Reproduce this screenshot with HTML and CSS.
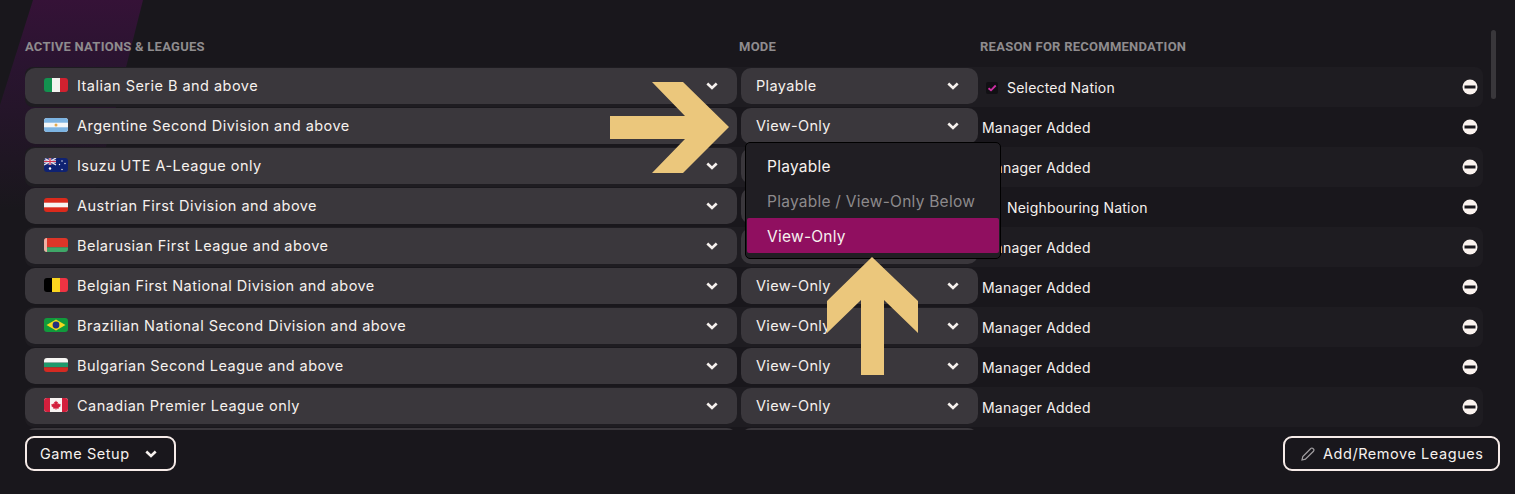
FILE: index.html
```html
<!DOCTYPE html>
<html lang="en">
<head>
    <meta charset="UTF-8">
    <title>Active Nations and Leagues</title>
    <link rel="stylesheet" href="styles.css">
</head>
<body>
    <div class="glow"></div>
    <svg width="0" height="0" class="defs">
        <defs>
            <symbol id="chev" viewBox="0 0 12 8"><path d="M1.300 1.500 6 6l4.700-4.500" fill="none" stroke="currentColor" stroke-width="2.600"/></symbol>
            <symbol id="minus" viewBox="0 0 16 16"><circle cx="8" cy="8" r="7.500" fill="#fbf3ef"/><rect x="2.500" y="6.500" width="11" height="3" fill="#1b191e"/></symbol>
            <symbol id="tick" viewBox="0 0 12 12"><rect width="12" height="12" rx="2" fill="#111014"/><path d="M2.500 6.200 5 8.300l4.700-4.800" fill="none" stroke="#cf2fa5" stroke-width="1.800"/></symbol>
        </defs>
    </svg>

    <main class="panel">
        <div class="heads">
            <span>ACTIVE NATIONS &amp; LEAGUES</span>
            <span>MODE</span>
            <span>REASON FOR RECOMMENDATION</span>
        </div>

        <div class="list">
            <div class="row">
                <div class="select nation">
                    <svg class="flag" viewBox="0 0 24 14"><rect width="8" height="14" fill="#12924f"/><rect x="8" width="8" height="14" fill="#f3f3f0"/><rect x="16" width="8" height="14" fill="#d0212f"/></svg>
                    <span class="grow">Italian Serie B and above</span>
                    <svg class="chev"><use href="#chev"/></svg>
                </div>
                <div class="select mode"><span class="grow">Playable</span><svg class="chev"><use href="#chev"/></svg></div>
                <div class="reason"><svg class="tick"><use href="#tick"/></svg><span class="grow">Selected Nation</span><svg class="minus"><use href="#minus"/></svg></div>
            </div>
            <div class="row">
                <div class="select nation">
                    <svg class="flag" viewBox="0 0 24 14"><rect width="24" height="14" fill="#f4f6f7"/><rect width="24" height="4.700" fill="#7db4e2"/><rect y="9.300" width="24" height="4.700" fill="#7db4e2"/><circle cx="12" cy="7" r="1.500" fill="#e5a94c"/></svg>
                    <span class="grow">Argentine Second Division and above</span>
                    <svg class="chev"><use href="#chev"/></svg>
                </div>
                <div class="select mode"><span class="grow">View-Only</span><svg class="chev"><use href="#chev"/></svg></div>
                <div class="reason plain"><span class="grow">Manager Added</span><svg class="minus"><use href="#minus"/></svg></div>
            </div>
            <div class="row">
                <div class="select nation">
                    <svg class="flag" viewBox="0 0 24 14"><rect width="24" height="14" fill="#0f2272"/><rect width="12" height="7" fill="#2b3a80"/><path d="M0 0l12 7M12 0 0 7" stroke="#e9e2ea" stroke-width="1.400"/><path d="M6 0v7M0 3.500h12" stroke="#e9e2ea" stroke-width="2.400"/><path d="M6 0v7M0 3.500h12" stroke="#d0344f" stroke-width="1.200"/><circle cx="6" cy="10.500" r="1.200" fill="#fff"/><circle cx="18" cy="3" r=".7" fill="#fff"/><circle cx="18" cy="11.500" r=".7" fill="#fff"/><circle cx="15.500" cy="6.500" r=".7" fill="#fff"/><circle cx="21" cy="5.500" r=".7" fill="#fff"/></svg>
                    <span class="grow">Isuzu UTE A-League only</span>
                    <svg class="chev"><use href="#chev"/></svg>
                </div>
                <div class="select mode"><span class="grow"></span><svg class="chev"><use href="#chev"/></svg></div>
                <div class="reason plain"><span class="grow">Manager Added</span><svg class="minus"><use href="#minus"/></svg></div>
            </div>
            <div class="row">
                <div class="select nation">
                    <svg class="flag" viewBox="0 0 24 14"><rect width="24" height="14" fill="#db2a1c"/><rect y="4.700" width="24" height="4.600" fill="#f6f4f2"/></svg>
                    <span class="grow">Austrian First Division and above</span>
                    <svg class="chev"><use href="#chev"/></svg>
                </div>
                <div class="select mode"><span class="grow"></span><svg class="chev"><use href="#chev"/></svg></div>
                <div class="reason"><svg class="tick"><use href="#tick"/></svg><span class="grow">Neighbouring Nation</span><svg class="minus"><use href="#minus"/></svg></div>
            </div>
            <div class="row">
                <div class="select nation">
                    <svg class="flag" viewBox="0 0 24 14"><rect width="24" height="9.300" fill="#dd3528"/><rect y="9.300" width="24" height="4.700" fill="#3fa768"/><rect width="3" height="14" fill="#eeb0a4"/></svg>
                    <span class="grow">Belarusian First League and above</span>
                    <svg class="chev"><use href="#chev"/></svg>
                </div>
                <div class="select mode"><span class="grow"></span><svg class="chev"><use href="#chev"/></svg></div>
                <div class="reason plain"><span class="grow">Manager Added</span><svg class="minus"><use href="#minus"/></svg></div>
            </div>
            <div class="row">
                <div class="select nation">
                    <svg class="flag" viewBox="0 0 24 14"><rect width="8" height="14" fill="#000"/><rect x="8" width="8" height="14" fill="#fbd51f"/><rect x="16" width="8" height="14" fill="#ee3342"/></svg>
                    <span class="grow">Belgian First National Division and above</span>
                    <svg class="chev"><use href="#chev"/></svg>
                </div>
                <div class="select mode"><span class="grow">View-Only</span><svg class="chev"><use href="#chev"/></svg></div>
                <div class="reason plain"><span class="grow">Manager Added</span><svg class="minus"><use href="#minus"/></svg></div>
            </div>
            <div class="row">
                <div class="select nation">
                    <svg class="flag" viewBox="0 0 24 14"><rect width="24" height="14" fill="#119a3c"/><path d="M12 1.500 21.500 7 12 12.500 2.500 7z" fill="#f5d81f"/><circle cx="12" cy="7" r="3.400" fill="#23307f"/></svg>
                    <span class="grow">Brazilian National Second Division and above</span>
                    <svg class="chev"><use href="#chev"/></svg>
                </div>
                <div class="select mode"><span class="grow">View-Only</span><svg class="chev"><use href="#chev"/></svg></div>
                <div class="reason plain"><span class="grow">Manager Added</span><svg class="minus"><use href="#minus"/></svg></div>
            </div>
            <div class="row">
                <div class="select nation">
                    <svg class="flag" viewBox="0 0 24 14"><rect width="24" height="4.700" fill="#f7f7f5"/><rect y="4.700" width="24" height="4.600" fill="#1d9a6c"/><rect y="9.300" width="24" height="4.700" fill="#d42a22"/></svg>
                    <span class="grow">Bulgarian Second League and above</span>
                    <svg class="chev"><use href="#chev"/></svg>
                </div>
                <div class="select mode"><span class="grow">View-Only</span><svg class="chev"><use href="#chev"/></svg></div>
                <div class="reason plain"><span class="grow">Manager Added</span><svg class="minus"><use href="#minus"/></svg></div>
            </div>
            <div class="row">
                <div class="select nation">
                    <svg class="flag" viewBox="0 0 24 14"><rect width="24" height="14" fill="#f7f3f2"/><rect width="6" height="14" fill="#d31f3c"/><rect x="18" width="6" height="14" fill="#d31f3c"/><path d="M12 2.500l1 1.800 1-.5-.4 2.400 1.300-1 .4 1 1.400-.2-.5 1.500.6.400-2.300 1.900.3 1-2.500-.3V12h-.6v-1.500l-2.500.3.300-1-2.300-1.900.6-.4-.5-1.500 1.400.2.4-1 1.300 1-.4-2.400 1 .5z" fill="#d31f3c"/></svg>
                    <span class="grow">Canadian Premier League only</span>
                    <svg class="chev"><use href="#chev"/></svg>
                </div>
                <div class="select mode"><span class="grow">View-Only</span><svg class="chev"><use href="#chev"/></svg></div>
                <div class="reason plain"><span class="grow">Manager Added</span><svg class="minus"><use href="#minus"/></svg></div>
            </div>
            <div class="row">
                <div class="select nation"></div>
                <div class="select mode"></div>
            </div>
        </div>

        <div class="foot">
            <button class="btn setup">Game Setup <svg class="chev"><use href="#chev"/></svg></button>
            <button class="btn add">
                <svg class="pencil" viewBox="0 0 14 14"><path d="M1 13l.8-3.400L9.800 1.500a1.500 1.500 0 0 1 2.200 0l.5.500a1.500 1.500 0 0 1 0 2.200L4.400 12.200z" fill="none" stroke="#a3a0a3" stroke-width="1.200"/></svg>
                Add/Remove Leagues
            </button>
        </div>
    </main>

    <div class="scrollbar"></div>

    <div class="menu">
        <div class="item">Playable</div>
        <div class="item off">Playable / View-Only Below</div>
        <div class="item on">View-Only</div>
    </div>

    <svg class="arrow arrow-right" viewBox="0 0 119 91"><path d="M0 34h75L42 0h31l46 45-46 46H42l33-34H0z"/></svg>
    <svg class="arrow arrow-up" viewBox="0 0 91 118"><path d="M45 0l46 44v32L57 43v75H34V43L0 76V44z"/></svg>
</body>
</html>
```

FILE: styles.css
```css
* {
    box-sizing: border-box;
}

body {
    margin: 0;
    height: 494px;
    overflow: hidden;
    background: #19171c;
    color: #f6f1ee;
    font-family: "Inter", "Liberation Sans", sans-serif;
    font-size: 14.5px;
    letter-spacing: .47px;
}

.defs {
    position: absolute;
}

.glow {
    position: absolute;
    left: 0;
    top: 0;
    width: 150px;
    height: 210px;
    background: linear-gradient(180deg, #351237 0%, #2a1430 30%, rgba(40, 22, 44, 0) 100%);
    clip-path: polygon(33px 0, 143px 0, 90px 210px, 0 210px, 0 105px);
}

.panel {
    position: relative;
    padding: 40px 32px 0 25px;
}

.heads {
    display: grid;
    grid-template-columns: 714px 241px 1fr;
    height: 27px;
    font-family: "Roboto", "Liberation Sans", sans-serif;
    font-weight: bold;
    font-size: 13px;
    letter-spacing: .25px;
    color: #8f8c8e;
    line-height: 14px;
}

.list {
    height: 363px;
    overflow: hidden;
}

.row {
    display: grid;
    grid-template-columns: 712px 237px 1fr;
    column-gap: 4px;
    height: 40px;
    padding-top: 1px;
    border-radius: 8px;
}

.row:nth-child(odd) {
    background: #1e1c21;
}

.select {
    display: flex;
    align-items: center;
    height: 36px;
    background: #3a373c;
    border-radius: 10px;
}

.select .grow {
    padding-bottom: 2px;
}

.nation {
    padding: 0 19px;
}

.mode {
    padding: 0 19px 0 15px;
    letter-spacing: .35px;
}

.grow {
    flex: 1;
}

.flag {
    width: 24px;
    height: 14px;
    margin-right: 9px;
    border-radius: 3px;
    position: relative;
    top: -1px;
}

.chev {
    width: 12px;
    height: 8px;
    color: #f6f1ee;
}

.reason {
    display: flex;
    align-items: center;
    height: 39px;
    margin-left: -4px;
    padding: 0 5px 0 8px;
    font-size: 14px;
    letter-spacing: .2px;
}

.reason.plain {
    padding-left: 4px;
}

.tick {
    width: 12px;
    height: 12px;
    margin-right: 9px;
}

.minus {
    width: 16px;
    height: 16px;
    margin-top: -2px;
}

.foot {
    display: flex;
    justify-content: space-between;
    align-items: center;
    margin-top: 6px;
    margin-right: -17px;
}

.btn {
    display: flex;
    align-items: center;
    height: 35px;
    background: #19171c;
    color: inherit;
    font: inherit;
    letter-spacing: .55px;
    border: 2px solid #f6ebe8;
    border-radius: 9px;
}

.setup {
    width: 151px;
    padding: 0 0 0 13px;
}

.setup .chev {
    margin-left: 15px;
}

.add {
    width: 217px;
    padding: 0 0 0 16px;
}

.pencil {
    width: 14px;
    height: 14px;
    margin-right: 8px;
}

.scrollbar {
    position: absolute;
    left: 1491px;
    top: 30px;
    width: 5px;
    height: 69px;
    border-radius: 3px;
    background: #39373b;
}

.menu {
    position: absolute;
    left: 745px;
    top: 142px;
    width: 256px;
    height: 117px;
    padding: 5px 1px 0;
    background: #201e23;
    border: 1px solid #000;
    border-radius: 5px;
    font-size: 15.5px;
    letter-spacing: .25px;
}

.item {
    height: 35px;
    line-height: 38px;
    padding-left: 20px;
}

.item.off {
    color: #8d8a8c;
}

.item.on {
    background: #900f60;
    border-radius: 2px;
}

.arrow {
    position: absolute;
    fill: #ebc77c;
}

.arrow-right {
    left: 610px;
    top: 82px;
    width: 119px;
    height: 91px;
}

.arrow-up {
    left: 827px;
    top: 257px;
    width: 91px;
    height: 118px;
}
```
